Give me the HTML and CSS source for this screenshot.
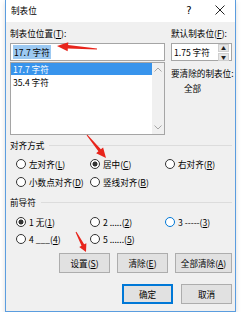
FILE: index.html
```html
<!DOCTYPE html>
<html lang="zh-CN">
<head>
  <meta charset="UTF-8">
  <title>制表位</title>
  <link rel="stylesheet" href="styles.css">
</head>
<body>
  <div class="dialog">
    <div class="titlebar">
      <span class="title">制表位</span>
      <span class="help">?</span>
      <span class="close">
        <svg width="10" height="10" viewBox="0 0 10 10"><path d="M0.5 0.5 L9.5 9.5 M9.5 0.5 L0.5 9.5" stroke="#222" stroke-width="1"/></svg>
      </span>
    </div>
    <div class="content">
      <div class="top">
        <div class="col-left">
          <div class="label">制表位位置(<u>T</u>):</div>
          <div class="edit"><span class="hl">17.7 字符</span></div>
          <div class="list">
            <div class="items">
              <div class="item active">17.7 字符</div>
              <div class="item">35.4 字符</div>
            </div>
            <div class="scroll">
              <svg width="8" height="5" viewBox="0 0 8 5"><path d="M0.5 4.5 L4 1 L7.5 4.5" fill="none" stroke="#a6a6a6"/></svg>
              <svg width="8" height="5" viewBox="0 0 8 5"><path d="M0.5 0.5 L4 4 L7.5 0.5" fill="none" stroke="#a6a6a6"/></svg>
            </div>
          </div>
        </div>
        <div class="col-right">
          <div class="label">默认制表位(<u>F</u>):</div>
          <div class="spin">
            <span>1.75 字符</span>
            <div class="spin-btns">
              <span>▲</span>
              <span>▼</span>
            </div>
          </div>
          <div class="clear-label">要清除的制表位:</div>
          <div class="clear-val">全部</div>
        </div>
      </div>

      <div class="group-title"><span>对齐方式</span><i></i></div>
      <div class="radios">
        <div class="opt"><span class="radio"></span>左对齐(<u>L</u>)</div>
        <div class="opt"><span class="radio on"></span>居中(<u>C</u>)</div>
        <div class="opt"><span class="radio"></span>右对齐(<u>R</u>)</div>
        <div class="opt"><span class="radio"></span>小数点对齐(<u>D</u>)</div>
        <div class="opt"><span class="radio"></span>竖线对齐(<u>B</u>)</div>
      </div>

      <div class="group-title"><span>前导符</span><i></i></div>
      <div class="radios leaders">
        <div class="opt"><span class="radio on"></span>1 无(<u>1</u>)</div>
        <div class="opt"><span class="radio"></span>2 .....(<u>2</u>)</div>
        <div class="opt"><span class="radio hover"></span>3 -----(<u>3</u>)</div>
        <div class="opt"><span class="radio"></span>4 ___(<u>4</u>)</div>
        <div class="opt"><span class="radio"></span>5 ......(<u>5</u>)</div>
      </div>

      <div class="buttons">
        <button class="btn">设置(<u>S</u>)</button>
        <button class="btn">清除(<u>E</u>)</button>
        <button class="btn wide">全部清除(<u>A</u>)</button>
      </div>
      <div class="buttons ok-row">
        <button class="btn default">确定</button>
        <button class="btn">取消</button>
      </div>
    </div>
  </div>

  <!-- 红色标注箭头 -->
  <svg class="marks" width="242" height="317" viewBox="0 0 242 317">
    <polygon fill="#e8251c" points="57,46 68.31,42.34 68.10,45.04 97.04,48.40 96.96,49.60 67.84,48.62 67.63,51.32"/>
    <polygon fill="#e8251c" points="106,158 103.10,147.41 100.87,149.26 87.39,134.68 86.61,135.32 98.39,151.30 96.16,153.15"/>
    <polygon fill="#e8251c" points="86,252 86.37,243.17 84.15,244.33 76.44,231.77 75.56,232.23 81.49,245.72 79.28,246.88"/>
  </svg>
</body>
</html>
```

FILE: styles.css
```css
body {
  margin: 0;
  background: #ffffff;
  font-family: "Noto Sans CJK SC", "Microsoft YaHei", sans-serif;
  font-size: 8.6px;
  color: #000000;
}

.dialog {
  box-sizing: border-box;
  width: 231px;
  height: 312px;
  margin-left: 5px;
  border: 1px solid #5b9ddf;
  border-top: none;
  background: #f0f0f0;
  box-shadow: 0 2px 5px rgba(0, 0, 0, 0.15);
}

.titlebar {
  display: flex;
  align-items: center;
  height: 22px;
  padding-left: 5px;
  background: #ffffff;
}

.title {
  flex: 1;
  line-height: 12px;
  margin-top: -2px;
}

.help {
  width: 14px;
  text-align: center;
  font-family: "DejaVu Sans", sans-serif;
  font-size: 10px;
  margin-top: -2px;
  margin-right: 19px;
}

.close {
  display: flex;
  margin-right: 10px;
  margin-top: -2px;
}

.content {
  padding: 5px 3px 0 4px;
}

.label {
  line-height: 12px;
  height: 12px;
  white-space: nowrap;
}

.top {
  display: grid;
  grid-template-columns: 155px 61px;
  column-gap: 6px;
}

.edit,
.spin {
  box-sizing: border-box;
  height: 18px;
  margin-top: 4px;
  background: #ffffff;
  border: 1px solid #a5a5a5;
  display: flex;
  align-items: center;
  padding-left: 2px;
  line-height: 12px;
}

.hl {
  background: #9cc9f2;
  padding: 1px 1px;
}

.list {
  box-sizing: border-box;
  height: 73px;
  margin-top: 1px;
  background: #ffffff;
  border: 1px solid #a5a5a5;
  display: flex;
}

.items {
  flex: 1;
}

.item {
  line-height: 13px;
  height: 13px;
  padding-left: 2px;
}

.item.active {
  background: #3894ec;
  color: #ffffff;
  height: 12px;
  line-height: 12px;
  margin-bottom: 1px;
}

.scroll {
  width: 12px;
  background: #f0f0f0;
  display: flex;
  flex-direction: column;
  justify-content: space-between;
  align-items: center;
  padding: 4px 0 4px;
}

.spin {
  justify-content: space-between;
  padding-right: 2px;
}

.spin-btns {
  display: flex;
  flex-direction: column;
  gap: 1px;
}

.spin-btns span {
  display: block;
  width: 9px;
  height: 6px;
  line-height: 6px;
  font-size: 5px;
  text-align: center;
  background: #e6e6e6;
  border: 1px solid #cfcfcf;
  color: #222;
}

.clear-label {
  margin-top: 6px;
  line-height: 12px;
  white-space: nowrap;
}

.clear-val {
  margin-top: 3px;
  padding-left: 13px;
  line-height: 12px;
}

.group-title {
  display: flex;
  align-items: center;
  line-height: 12px;
  margin-top: 4px;
}

.group-title i {
  flex: 1;
  height: 1px;
  background: #dcdcdc;
  margin-left: 5px;
}

.radios {
  display: grid;
  grid-template-columns: 74px 75px 1fr;
  padding-left: 6px;
  margin-top: 4px;
  margin-bottom: 5px;
}

.opt {
  display: flex;
  align-items: center;
  height: 18px;
  white-space: nowrap;
}

.leaders {
  margin-top: 5px;
  margin-bottom: 6px;
}

.leaders .opt {
  height: 17px;
}

.radio {
  box-sizing: border-box;
  width: 10px;
  height: 10px;
  border: 1px solid #333333;
  border-radius: 50%;
  background: #ffffff;
  margin-right: 3px;
  flex-shrink: 0;
}

.radio.on {
  background: radial-gradient(circle, #333333 0 2.2px, #ffffff 2.8px);
}

.radio.hover {
  border-color: #0078d7;
}

.buttons {
  display: flex;
  justify-content: flex-end;
  gap: 7px;
}

.ok-row {
  margin-top: 11px;
  gap: 8px;
}

.btn {
  box-sizing: border-box;
  width: 51px;
  height: 20px;
  padding: 0;
  background: #e1e1e1;
  border: 1px solid #adadad;
  font-family: inherit;
  font-size: 8.6px;
  color: #000;
  line-height: 12px;
}

.btn.wide {
  width: 57px;
}

.btn.default {
  border-color: #0078d7;
  box-shadow: inset 0 0 0 1px #0078d7;
}

.marks {
  position: absolute;
  left: 0;
  top: 0;
  pointer-events: none;
}
```
